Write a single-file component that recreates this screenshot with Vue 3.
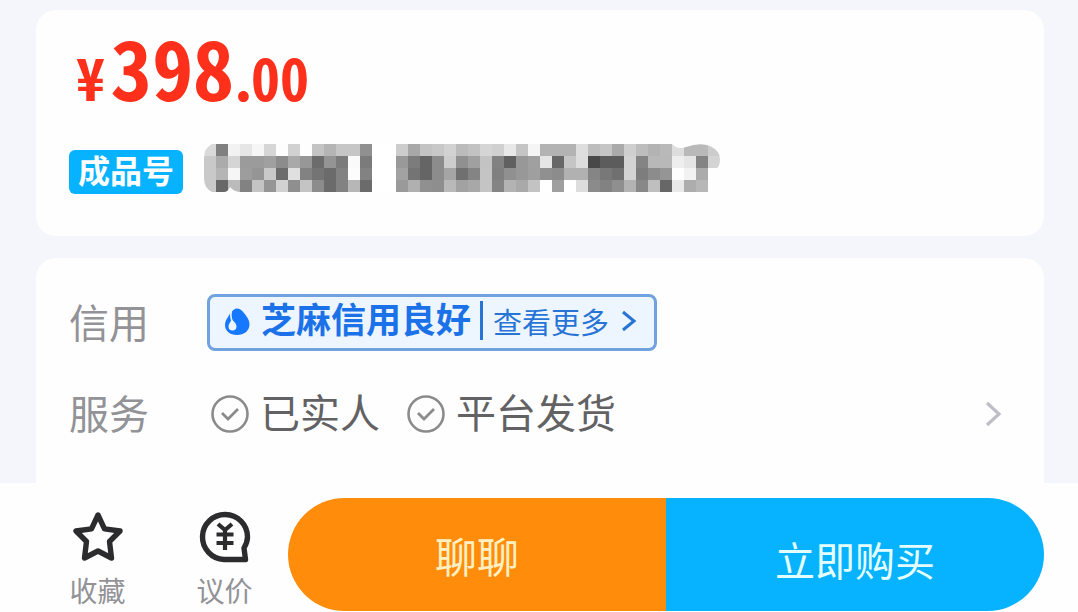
<script setup>
const mosaicRows = [
  'd980f2e6f6d6fdd1fec4b5c6c690ffffcda8c3c8d2bbc2d5d0e8c5f5b3b3b3debdc5aacfbdb3b9ddb9b9cc',
  'c9abd59b9ba08ca9976c947bfa7bffff997c658ccd90a0c3826098a0e567c5dd485c5cd384b8b8eee584d4',
  'c9b5f69d95c96ce082746b82fc82ffffa274658ca57084c48090989f908cb1b1857870d37d8c95fef2abff',
  'c968bb82c495d18fc48c6b82b76bffff9ab0908eb9a2a8c484b3a9c3ff9fffdd8b828fb388bf67e9adb7ff',
]
const cells = mosaicRows.flatMap((row, y) =>
  row.match(/../g).map((v, x) => ({ x: x * 12, y: y * 12, fill: `#${v}${v}${v}` }))
)
const services = ['已实人', '平台发货']
</script>

<template>
  <div class="page">
    <main class="content">
      <section class="card product">
        <div class="price"><span class="minor">¥</span><span class="major">398</span><span class="point">.</span><span class="minor">00</span></div>
        <div class="title-row">
          <span class="tag">成品号</span>
          <svg class="mosaic" width="516" height="48" viewBox="0 0 516 48" role="img" aria-label="商品标题">
            <defs>
              <clipPath id="title-clip">
                <path d="M8 0H468Q474 6 482 3Q496-2 506 2Q516 7 516 15Q516 22 513 24H504V48H35Q29 47 26 43Q24 48 20 48H8Q0 44 0 34V14Q0 4 8 0Z" />
              </clipPath>
            </defs>
            <g clip-path="url(#title-clip)" shape-rendering="crispEdges">
              <rect v-for="(c, i) in cells" :key="i" :x="c.x" :y="c.y" width="12" height="12" :fill="c.fill" />
            </g>
          </svg>
        </div>
      </section>

      <section class="card details">
        <div class="row">
          <span class="label">信用</span>
          <a class="credit" href="#">
            <svg width="26" height="28" viewBox="0 -1 26 28" aria-hidden="true">
              <path d="M12 0.5C15 0 18 2 20 5C23 9 25.5 12 25.5 16C25.5 23 20 27 13 27C6 27 1 23 1 17C1 14 2 12 4 9C6 6 8 2 12 0.500Z" fill="#1677ff" />
              <path d="M7.5 11C9 13 12.5 15 12.5 18.5C12.5 21 11 22.5 8.5 22.5C6 22.5 4.500 21 4.5 18.5C4.5 15.5 7 14 7.5 11Z" fill="#edf5ff" />
              <path d="M8 1C6.5 5 6.5 9 8 13" fill="none" stroke="#edf5ff" stroke-width="1.6" />
            </svg>
            <strong class="credit-name">芝麻信用良好</strong>
            <span class="divider"></span>
            <span class="more">查看更多</span>
            <svg class="more-arrow" width="16" height="24" viewBox="0 0 16 24" aria-hidden="true">
              <path d="M2 3L13 12L2 21" fill="none" stroke="#2874d6" stroke-width="3" />
            </svg>
          </a>
        </div>
        <div class="row">
          <span class="label">服务</span>
          <div class="services">
            <span v-for="s in services" :key="s" class="service">
              <svg width="40" height="40" viewBox="0 0 40 40" aria-hidden="true">
                <circle cx="20" cy="20" r="17.5" fill="none" stroke="#8b8b8d" stroke-width="2.6" />
                <path d="M12 19L18 25L28 15" fill="none" stroke="#8b8b8d" stroke-width="2.8" />
              </svg>
              {{ s }}
            </span>
          </div>
          <svg width="18" height="28" viewBox="0 0 18 28" aria-hidden="true">
            <path d="M3 3L15 14L3 25" fill="none" stroke="#bfbdc5" stroke-width="3.2" />
          </svg>
        </div>
      </section>
    </main>

    <footer class="bar">
      <button class="action" type="button">
        <svg width="54" height="54" viewBox="0 0 54 54" aria-hidden="true">
          <path d="M27 5L33.5 18.8L49 21L38.5 31.5L40.5 48L27 41L13.5 48L15.5 31.5L5 21L20.5 18.8Z" fill="none" stroke="#2c2c2e" stroke-width="5.4" stroke-linejoin="round" />
        </svg>
        <span>收藏</span>
      </button>
      <button class="action" type="button">
        <svg width="54" height="54" viewBox="0 0 54 54" aria-hidden="true">
          <path d="M26 49.5A22.5 22.5 0 1 1 49.5 27Q49.5 32 46 38L47.5 49.5Z" fill="none" stroke="#2c2c2e" stroke-width="5.4" stroke-linejoin="round" />
          <path d="M20 14L27 20L34 14M27 20V40M18.5 24.5H35.5M18.5 33H35.5" fill="none" stroke="#2c2c2e" stroke-width="4.2" />
        </svg>
        <span>议价</span>
      </button>
      <div class="cta">
        <button class="chat" type="button">聊聊</button>
        <button class="buy" type="button">立即购买</button>
      </div>
    </footer>
  </div>
</template>

<style>
body {
  margin: 0;
  background: #f5f6fb;
}
</style>

<style scoped>
.page {
  min-height: 100vh;
  display: flex;
  flex-direction: column;
  background: #f5f6fb;
  font-family: "Liberation Sans", "Noto Sans CJK SC", sans-serif;
}
.content {
  flex: 1;
  display: flex;
  flex-direction: column;
  gap: 22px;
  padding: 10px 34px 0 36px;
}
.card {
  background: #fefefe;
  border-radius: 20px;
}
.product {
  padding: 16px 33px 42px;
}
.price {
  display: flex;
  align-items: baseline;
  height: 80px;
  padding-left: 7px;
  margin-bottom: 38px;
  color: #ff301b;
  font-family: "Noto Sans CJK SC", sans-serif;
  font-weight: 700;
  line-height: 80px;
}
.major {
  margin-left: 6px;
  font-size: 82px;
  font-feature-settings: "hwid";
}
.minor {
  font-size: 58px;
  font-feature-settings: "hwid";
}
.point {
  margin-right: -2px;
  font-size: 58px;
}
.title-row {
  display: flex;
  align-items: flex-start;
  gap: 21px;
}
.tag {
  margin-top: 6px;
  padding: 0 9px;
  border-radius: 6px;
  background: #07b2ff;
  color: #fff;
  font-size: 32px;
  font-weight: 700;
  line-height: 44px;
}
.details {
  flex: 1;
  display: flex;
  flex-direction: column;
  gap: 39px;
  padding: 36px 42px 45px 33px;
  border-radius: 20px 20px 0 0;
}
.row {
  display: flex;
  align-items: center;
}
.label {
  box-sizing: border-box;
  width: 138px;
  padding-top: 2px;
  color: #929297;
  font-size: 40px;
  line-height: 46px;
}
.credit {
  display: flex;
  align-items: center;
  box-sizing: border-box;
  height: 57px;
  padding: 0 17px 4px 14px;
  border: 3px solid #71a1df;
  border-radius: 8px;
  background: #edf5ff;
  color: #2874d6;
  text-decoration: none;
}
.credit-name {
  margin-left: 11px;
  color: #1b72e8;
  font-size: 35px;
  line-height: 48px;
}
.divider {
  width: 3px;
  height: 39px;
  margin: 0 10px 0 9px;
  background: #2874d6;
}
.more {
  font-size: 29px;
}
.more-arrow {
  margin-left: 12px;
}
.services {
  flex: 1;
  display: flex;
  gap: 26px;
  padding-left: 3px;
}
.service {
  display: flex;
  align-items: center;
  gap: 10px;
  color: #626264;
  font-size: 40px;
  line-height: 48px;
}
.bar {
  display: flex;
  padding: 15px 34px 1px;
  background: #fefefe;
}
.action {
  display: flex;
  flex-direction: column;
  align-items: center;
  gap: 12px;
  width: 127px;
  height: 113px;
  padding: 12px 0 0;
  border: 0;
  background: none;
  color: #929297;
  font: 28px/34px "Liberation Sans", "Noto Sans CJK SC", sans-serif;
}
.cta {
  flex: 1;
  display: flex;
  height: 113px;
  border-radius: 57px;
  overflow: hidden;
}
.cta button {
  flex: 1;
  border: 0;
  font-family: "Liberation Sans", "Noto Sans CJK SC", sans-serif;
}
.chat {
  padding: 0;
  background: #ff8d0b;
  color: #fff0c4;
  font-size: 42px;
}
.buy {
  padding: 8px 0 0;
  background: #07b2ff;
  color: #e4ffff;
  font-size: 40px;
}
</style>
